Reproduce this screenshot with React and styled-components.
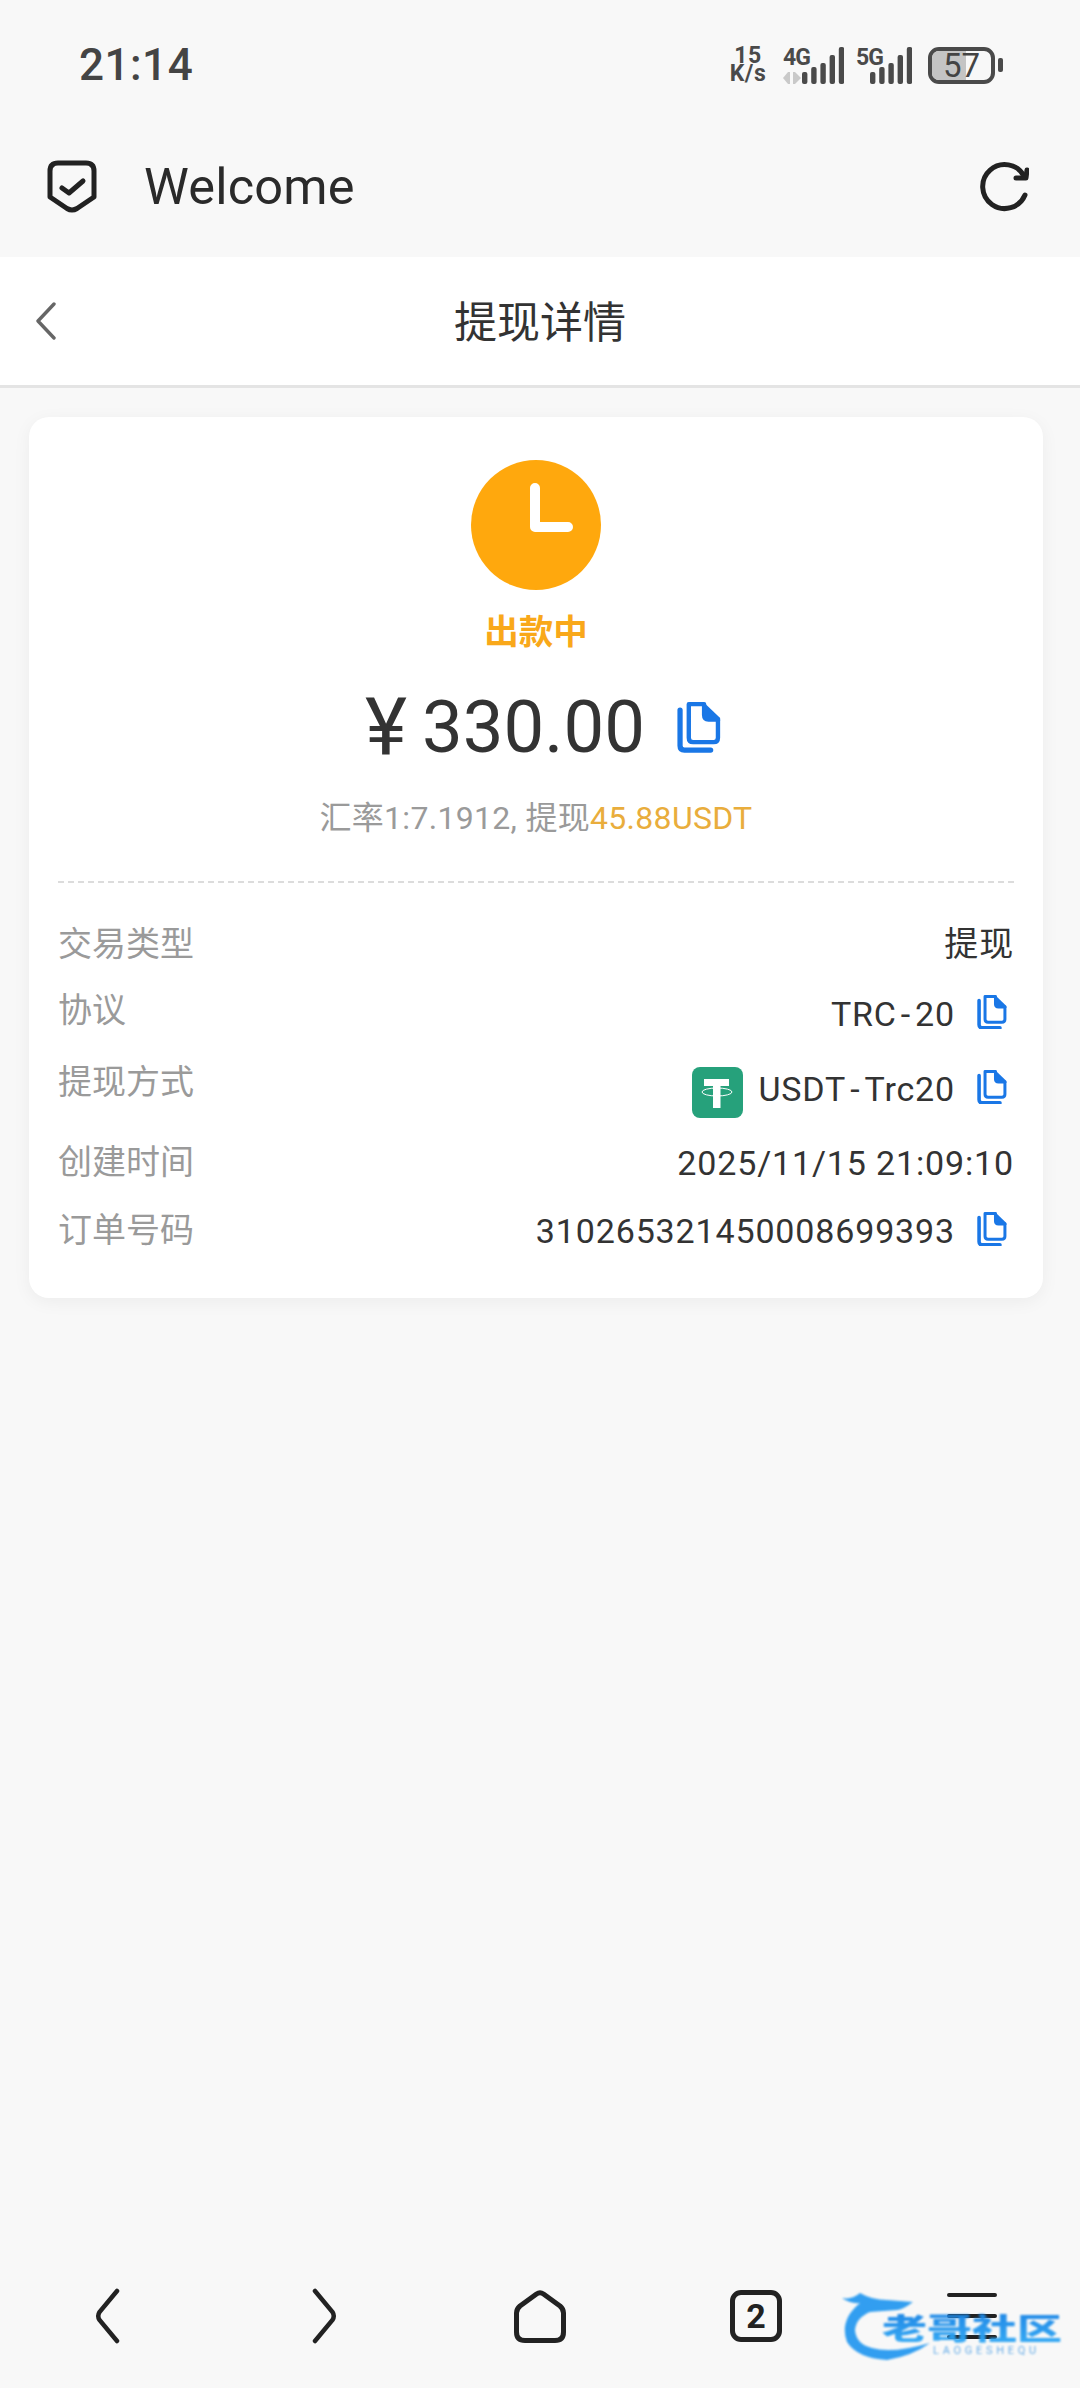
import React from "react";
import styled, { createGlobalStyle } from "styled-components";

const Global = createGlobalStyle`
  html, body { margin: 0; padding: 0; background: #f8f8f8; }
  * { box-sizing: border-box; }
  body { font-family: Roboto, "Noto Sans CJK SC", sans-serif; }
`;

const Page = styled.div`
  width: 1080px; height: 2388px; display: flex; flex-direction: column;
  background: #f8f8f8; overflow: hidden; position: relative;
`;
const StatusBar = styled.div`
  height: 130px; padding: 0 77px 0 79px; display: flex; align-items: center; justify-content: space-between;
  color: #444;
`;
const Time = styled.div`font-size: 44px; font-weight: 500; letter-spacing: 0.5px; line-height: 1;`;
const StatusIcons = styled.div`display: flex; align-items: center; height: 37px;`;
const Speed = styled.div`
  width: 40px; margin-right: 15px; text-align: center;
  font-size: 23px; font-weight: 700; line-height: 18.5px; letter-spacing: 0.5px; color: #4a4a4a; white-space: nowrap;
`;
const SignalSvg = styled.svg`display: block; margin-right: ${p => p.$gap}px;`;
const SignalLabel = styled.text`font-family: Roboto, sans-serif; font-size: 23px; font-weight: 700; fill: #4a4a4a; letter-spacing: -1px;`;
const Battery = styled.div`
  position: relative; width: 67px; height: 37px; border: 4px solid #4a4a4a; border-radius: 11px;
  overflow: hidden; display: flex; align-items: center; justify-content: center;
  font-size: 33px; color: #444; line-height: 1;
`;
const BatteryFill = styled.div`position: absolute; left: 0; top: 0; bottom: 0; background: #c4c4c4;`;
const BatteryText = styled.span`position: relative;`;
const BatteryNub = styled.div`width: 5px; height: 14px; margin-left: 3px; border-radius: 2px; background: #4a4a4a;`;

const AppBar = styled.div`
  height: 127px; padding: 0 51px 13px 47px; display: flex; align-items: center; justify-content: space-between;
`;
const AppLeft = styled.div`display: flex; align-items: center; gap: 47px;`;
const AppTitle = styled.div`font-size: 50.5px; color: #2a2a2a; line-height: 1; letter-spacing: 0.2px;`;

const Header = styled.div`
  height: 131px; background: #fff; border-bottom: 3px solid #e4e4e4; position: relative; padding-top: 5px;
  display: flex; align-items: center; justify-content: center;
`;
const HeaderTitle = styled.div`font-size: 43px; color: #333; line-height: 1;`;
const BackButton = styled.svg`position: absolute; left: 34px; top: 45px;`;

const Content = styled.div`padding: 29px 37px 0 29px;`;
const Card = styled.div`
  height: 881px; background: #fff; border-radius: 20px; padding: 43px 29px 0;
  box-shadow: 0 4px 18px rgba(0,0,0,0.05); display: flex; flex-direction: column; align-items: center;
`;
const Clock = styled.div`
  width: 130px; height: 130px; border-radius: 50%; background: #ffa80d; display: flex; align-items: center; justify-content: center;
`;
const StatusLabel = styled.div`
  margin-top: 22px; font-size: 34.5px; font-weight: 700; color: #f9a81a; line-height: 40px;
`;
const AmountRow = styled.div`
  margin-top: 36px; height: 80px; display: flex; align-items: center; color: #333; width: 100%;
  justify-content: center; padding-left: 14px;
`;
const Yen = styled.span`font-size: 80px; line-height: 80px; margin-right: 15px;`;
const Amount = styled.span`font-size: 72.5px; line-height: 80px; margin-right: 32px;`;
const RateLine = styled.div`
  margin-top: 30px; font-size: 32px; line-height: 40px; color: #9a9a9a; white-space: nowrap; letter-spacing: 0.3px;
`;
const RateHighlight = styled.span`color: #e9ad3c;`;
const Divider = styled.div`width: 100%; margin-top: 43px; border-top: 2px dashed #dcdcdc;`;
const Rows = styled.div`width: 100%; margin-top: 41px; display: flex; flex-direction: column; gap: 26px;`;
const Row = styled.div`
  height: ${p => p.$height}px; display: flex; justify-content: space-between; align-items: flex-start;
`;
const Label = styled.div`font-size: 34px; line-height: 40px; color: #9a9a9a;`;
const Value = styled.div`
  margin-top: ${p => p.$offset || 0}px; height: 40px; display: flex; align-items: center; font-size: 34px; line-height: 40px; color: #333;
  white-space: nowrap; letter-spacing: 0.85px;
`;
const Dash = styled.span`margin: 0 4px;`;
const CopyWrap = styled.span`display: flex; margin-left: ${p => p.$gap}px; margin-right: ${p => p.$right}px; transform: translateY(-2px);`;
const TetherBadge = styled.svg`display: block; margin-right: 15px; transform: translateY(3px);`;

const BottomNav = styled.div`
  margin-top: auto; height: 144px; display: grid; grid-template-columns: repeat(5, 216px); align-items: center; justify-items: center; position: relative;
`;
const NavIcon = styled.svg`display: block;`;
const TabsBox = styled.div`
  width: 52px; height: 52px; border: 5px solid #222; border-radius: 11px; display: flex; align-items: center; justify-content: center;
  font-size: 34px; font-weight: 700; color: #222; line-height: 1;
`;
const Watermark = styled.div`
  position: absolute; left: 842px; top: 46px; width: 226px; height: 72px; filter: blur(0.8px); opacity: 0.96;
`;
const WatermarkDragon = styled.svg`position: absolute; left: 0; top: 0;`;
const WatermarkText = styled.div`
  position: absolute; left: 40px; top: 24px; font-size: 45px; line-height: 46px; font-weight: 900; white-space: nowrap;
  transform: scaleY(0.66); transform-origin: top left;
  background: linear-gradient(180deg, #1a86e6, #2fa8f5); -webkit-background-clip: text; background-clip: text; color: transparent;
`;
const WatermarkSub = styled.div`
  position: absolute; left: 91px; top: 55px; font-size: 11px; line-height: 12px; letter-spacing: 3.7px; color: #62a9e6; white-space: nowrap;
`;

const CopyIcon = ({ size = 30 }) => (
  <svg width={size} height={size * 1.16} viewBox="0 0 30 35" fill="none">
    <path d="M2 5.5 V30 Q2 33 5 33 H23" stroke="#1a77e6" strokeWidth="3.6" strokeLinecap="round" />
    <path d="M8 1.5 H18.5 V9 Q18.5 12 21.5 12 H28 V24.5 Q28 27.5 25 27.5 H11 Q8 27.5 8 24.5 Z" fill="#fff" stroke="#1a77e6" strokeWidth="3" strokeLinejoin="round" />
    <path d="M18 0 L29.5 11 V13 H21 Q18 13 18 10 Z" fill="#1a77e6" />
  </svg>
);

const Signal = ({ label, width, barX, arrows, gap }) => {
  const tops = [25, 20, 16, 8, 0];
  return (
    <SignalSvg width={width} height="45" viewBox={`0 -4 ${width} 45`} $gap={gap}>
      <SignalLabel x="0" y="17.5">{label}</SignalLabel>
      {tops.map((t, i) => (
        <rect key={i} x={barX + i * 9.2} y={t} width="5.4" height={37 - t} rx="2" fill="#4a4a4a" />
      ))}
      {arrows && (
        <g fill="#c9c9c9">
          <path d="M0 31 L5 25 H7 V37 H5 Z" />
          <path d="M18 31 L12 25 H10 V37 H12 Z" />
        </g>
      )}
    </SignalSvg>
  );
};

export default function App() {
  return (
    <Page>
      <Global />
      <StatusBar>
        <Time>21:14</Time>
        <StatusIcons>
          <Speed>15<br />K/s</Speed>
          <Signal label="4G" width={61} barX={19} arrows gap={12} />
          <Signal label="5G" width={56} barX={14} gap={16} />
          <Battery>
            <BatteryFill style={{ width: "57%" }} />
            <BatteryText>57</BatteryText>
          </Battery>
          <BatteryNub />
        </StatusIcons>
      </StatusBar>

      <AppBar>
        <AppLeft>
          <svg width="50" height="54" viewBox="0 0 50 54" fill="none">
            <path d="M11 3 H39 Q47 3 47 11 V37 L30 48.5 Q25 51.5 20 48.5 L3 37 V11 Q3 3 11 3 Z" stroke="#222" strokeWidth="5" strokeLinejoin="round" />
            <path d="M15 28 L22 33 L36 21" stroke="#222" strokeWidth="5" strokeLinecap="round" strokeLinejoin="round" />
          </svg>
          <AppTitle>Welcome</AppTitle>
        </AppLeft>
        <svg width="52" height="52" viewBox="0 0 52 52" fill="none">
          <path d="M48 34 A22 22 0 1 1 47 15" stroke="#222" strokeWidth="5" strokeLinecap="round" />
          <path d="M50 9 L49 17 L39 17" stroke="#222" strokeWidth="5" strokeLinecap="round" strokeLinejoin="round" />
        </svg>
      </AppBar>

      <Header>
        <BackButton width="24" height="38" viewBox="0 0 24 38" fill="none">
          <path d="M20 2 L4 19 L20 36" stroke="#666" strokeWidth="3.4" strokeLinecap="round" strokeLinejoin="round" />
        </BackButton>
        <HeaderTitle>提现详情</HeaderTitle>
      </Header>

      <Content>
        <Card>
          <Clock>
            <svg width="130" height="130" viewBox="0 0 130 130" fill="none">
              <path d="M64 28 V67 H97" stroke="#fff" strokeWidth="10" strokeLinecap="round" strokeLinejoin="round" />
            </svg>
          </Clock>
          <StatusLabel>出款中</StatusLabel>
          <AmountRow>
            <Yen>¥</Yen>
            <Amount>330.00</Amount>
            <CopyIcon size={44} />
          </AmountRow>
          <RateLine>汇率1:7.1912, 提现<RateHighlight>45.88USDT</RateHighlight></RateLine>
          <Divider />
          <Rows>
            <Row $height={40}>
              <Label>交易类型</Label>
              <Value>提现</Value>
            </Row>
            <Row $height={46}>
              <Label>协议</Label>
              <Value $offset={4}>TRC<Dash>-</Dash>20<CopyWrap $gap={22} $right={7}><CopyIcon /></CopyWrap></Value>
            </Row>
            <Row $height={54}>
              <Label>提现方式</Label>
              <Value $offset={7}>
                <TetherBadge width="51" height="51" viewBox="0 0 51 51">
                  <rect width="51" height="51" rx="8" fill="#26a17b" />
                  <path d="M12 12 H37 V19 H28.5 V41 H21 V19 H12 Z" fill="#fff" />
                  <ellipse cx="25" cy="25" rx="15" ry="4" fill="none" stroke="#fff" strokeWidth="1" />
                </TetherBadge>
                USDT<Dash>-</Dash>Trc20<CopyWrap $gap={22} $right={7}><CopyIcon /></CopyWrap>
              </Value>
            </Row>
            <Row $height={42}>
              <Label>创建时间</Label>
              <Value $offset={1}>2025/11/15 21:09:10</Value>
            </Row>
            <Row $height={42}>
              <Label>订单号码</Label>
              <Value $offset={1}>310265321450008699393<CopyWrap $gap={22} $right={7}><CopyIcon /></CopyWrap></Value>
            </Row>
          </Rows>
        </Card>
      </Content>

      <BottomNav>
        <NavIcon width="30" height="56" viewBox="0 0 30 56" fill="none">
          <path d="M24 3 L6.5 24 Q4 28 6.5 32 L24 53" stroke="#222" strokeWidth="4.5" strokeLinecap="round" />
        </NavIcon>
        <NavIcon width="30" height="56" viewBox="0 0 30 56" fill="none">
          <path d="M6 3 L23.5 24 Q26 28 23.5 32 L6 53" stroke="#222" strokeWidth="4.5" strokeLinecap="round" />
        </NavIcon>
        <NavIcon width="52" height="53" viewBox="0 0 52 53" fill="none">
          <path d="M22.5 4 Q26 1.6 29.5 4 L46 16 Q49.5 19 49.5 23 V42 Q49.5 50.5 41 50.5 H11 Q2.5 50.5 2.5 42 V23 Q2.5 19 6 16 Z" stroke="#222" strokeWidth="5" strokeLinejoin="round" />
        </NavIcon>
        <TabsBox>2</TabsBox>
        <NavIcon width="50" height="46" viewBox="0 0 50 46" fill="none">
          <path d="M2 2 H48 M2 23 H48 M2 44 H48" stroke="#222" strokeWidth="4" strokeLinecap="round" />
        </NavIcon>
        <Watermark>
          <WatermarkDragon width="110" height="72" viewBox="0 0 110 72" fill="none">
            <path d="M0 8 Q10 10 18 3 Q30 10 45 10 L71 12 Q60 20 55 20 L28 22 Q14 28 13 40 Q14 54 30 58 Q50 64 88 53 Q70 66 45 70 Q15 68 5 52 Q-3 30 18 13 Q8 14 0 8 Z" fill="#2a9bf0" />
          </WatermarkDragon>
          <WatermarkText>老哥社区</WatermarkText>
          <WatermarkSub>LAOGESHEQU</WatermarkSub>
        </Watermark>
      </BottomNav>
    </Page>
  );
}
